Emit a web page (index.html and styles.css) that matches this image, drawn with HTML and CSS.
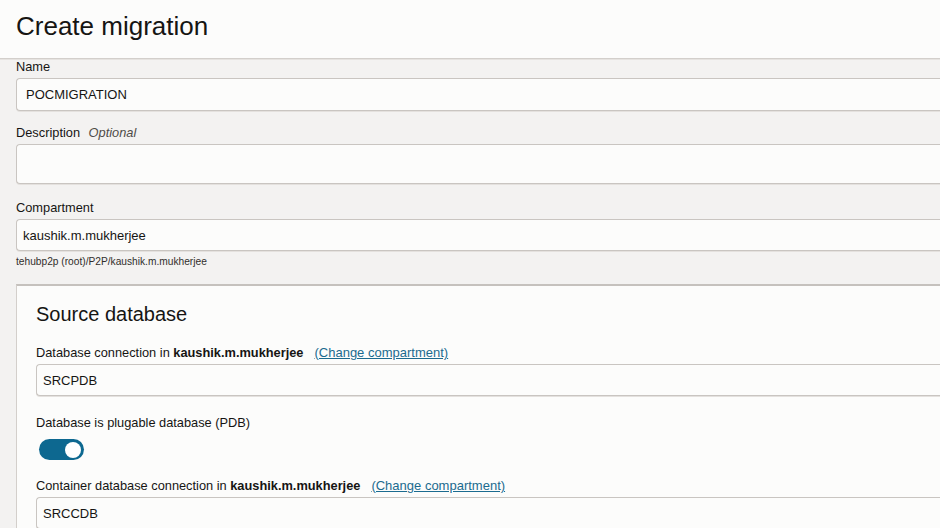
FILE: index.html
```html
<!DOCTYPE html>
<html lang="en">
<head>
<meta charset="utf-8">
<title>Create migration</title>
<link rel="stylesheet" href="styles.css">
</head>
<body>
<div class="page">
  <header class="header">
    <h1 class="title">Create migration</h1>
  </header>
  <main class="main">
    <div class="field">
      <label class="label">Name</label>
      <div class="input input-name">POCMIGRATION</div>
    </div>
    <div class="field field-desc">
      <label class="label">Description <span class="optional">Optional</span></label>
      <div class="input input-desc"></div>
    </div>
    <div class="field field-comp">
      <label class="label">Compartment</label>
      <div class="input input-comp">kaushik.m.mukherjee</div>
      <div class="helper">tehubp2p (root)/P2P/kaushik.m.mukherjee</div>
    </div>
    <section class="card">
      <h2 class="card-title">Source database</h2>
      <div class="field">
        <label class="label">Database connection in <b>kaushik.m.mukherjee</b><a class="link" href="#">(Change compartment)</a></label>
        <div class="input input-db">SRCPDB</div>
      </div>
      <div class="field field-toggle">
        <label class="label">Database is plugable database (PDB)</label>
        <div class="toggle"><span class="knob"></span></div>
      </div>
      <div class="field field-cdb">
        <label class="label">Container database connection in <b>kaushik.m.mukherjee</b><a class="link" href="#">(Change compartment)</a></label>
        <div class="input input-db">SRCCDB</div>
      </div>
    </section>
  </main>
</div>
</body>
</html>
```
FILE: styles.css
```css
html, body {
  margin: 0;
  padding: 0;
  background: #f3f2f1;
  overflow: hidden;
  font-family: "Liberation Sans", Arial, sans-serif;
  color: #161513;
}

.page {
  width: 100%;
}

.header {
  background: #fcfcfb;
  height: 59px;
  border-bottom: 1px solid #d3cfcb;
  box-shadow: 0 1px 0 #e6e3e0;
  padding: 11px 0 0 16px;
  box-sizing: border-box;
}

.title {
  margin: 0;
  font-size: 26px;
  line-height: 30px;
  font-weight: normal;
}

.main {
  padding: 1px 0 0 16px;
}

.field {
  display: flex;
  flex-direction: column;
}

.label {
  font-size: 12.8px;
  line-height: 14px;
  margin-bottom: 4px;
}

.label b {
  font-weight: bold;
}

.optional {
  font-style: italic;
  color: #4f4c48;
  margin-left: 5px;
}

.link {
  color: #1b6b8f;
  text-decoration: underline;
  margin-left: 11px;
  font-size: 13px;
}

.input {
  background: #fcfcfb;
  border: 1px solid #c9c5c1;
  border-right: 0;
  box-shadow: 0 1px 0 #e4e1de;
  border-radius: 4px 0 0 4px;
  box-sizing: border-box;
  font-size: 13px;
  display: flex;
  align-items: center;
}

.input-name {
  height: 33px;
  padding-left: 9px;
}

.field-desc {
  margin-top: 15px;
}

.input-desc {
  height: 40px;
}

.field-comp {
  margin-top: 17px;
}

.input-comp {
  height: 32px;
  padding-left: 6px;
}

.helper {
  font-size: 10.2px;
  line-height: 12px;
  margin-top: 5px;
  color: #312e2b;
}

.card {
  margin-top: 16px;
  background: #fcfcfb;
  border-top: 2px solid #c5c1bd;
  border-left: 1px solid #d3cfcb;
  padding: 16px 0 0 19px;
}

.card-title {
  margin: 0 0 20px;
  font-size: 20px;
  line-height: 24px;
  font-weight: normal;
}

.input-db {
  height: 32px;
  padding-left: 6px;
}

.field-toggle {
  margin-top: 20px;
}

.field-toggle .label {
  margin-bottom: 9px;
}

.toggle {
  width: 45px;
  height: 21px;
  margin-left: 3px;
  border-radius: 11px;
  background: #0d6890;
  display: flex;
  align-items: center;
  justify-content: flex-end;
  padding-right: 3px;
  box-sizing: border-box;
}

.knob {
  width: 16px;
  height: 16px;
  border-radius: 50%;
  background: #ffffff;
}

.field-cdb {
  margin-top: 19px;
}
```
